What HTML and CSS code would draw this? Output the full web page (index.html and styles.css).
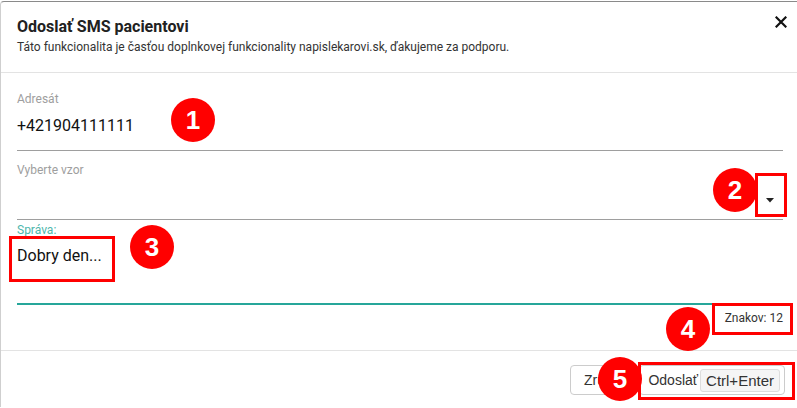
FILE: index.html
```html
<!DOCTYPE html>
<html lang="sk">
<head>
<meta charset="utf-8">
<title>Odoslať SMS pacientovi</title>
<link rel="stylesheet" href="styles.css">
</head>
<body>
<div class="modal">
  <div class="modal-header">
    <div class="header-text">
      <h4 class="title">Odoslať SMS pacientovi</h4>
      <p class="subtitle">Táto funkcionalita je časťou doplnkovej funkcionality napislekarovi.sk, ďakujeme za podporu.</p>
    </div>
    <button class="close" aria-label="Zavrieť">
      <svg width="12" height="12" viewBox="0 0 12 12"><path d="M1.5 1.5 L10.5 10.5 M10.5 1.5 L1.5 10.5" stroke="#111" stroke-width="2.2" stroke-linecap="square"/></svg>
    </button>
  </div>
  <div class="modal-body">
    <div class="field field-addr">
      <div class="label">Adresát</div>
      <div class="value">+421904111111</div>
    </div>
    <div class="field field-select">
      <div class="label">Vyberte vzor</div>
      <div class="select-row">
        <svg class="caret" width="10" height="5" viewBox="0 0 10 5"><path d="M1 0 H9 L5 4.5 Z" fill="#222"/></svg>
      </div>
    </div>
    <div class="field field-msg">
      <div class="label label-active">Správa:</div>
      <div class="textarea">Dobry den...</div>
    </div>
    <div class="counter">Znakov: 12</div>
  </div>
  <div class="modal-footer">
    <button class="btn">Zrušiť</button>
    <button class="btn btn-send">Odoslať <kbd class="kbd">Ctrl+Enter</kbd></button>
  </div>
</div>

<div class="annotations">
  <div class="mark mark-1">1</div>
  <div class="mark mark-2">2</div>
  <div class="mark mark-3">3</div>
  <div class="mark mark-4">4</div>
  <div class="mark mark-5">5</div>
  <div class="box box-2"></div>
  <div class="box box-3"></div>
  <div class="box box-4"></div>
  <div class="box box-5"></div>
</div>
</body>
</html>
```

FILE: styles.css
```css
html, body {
  margin: 0;
  padding: 0;
  background: #ffffff;
}

body {
  width: 797px;
  height: 408px;
  overflow: hidden;
  position: relative;
  font-family: Roboto, "Liberation Sans", sans-serif;
  color: #222;
}

.modal {
  margin-top: 1px;
  height: 406px;
  background: #fff;
  border-top: 1px solid #8a8a8a;
  border-left: 1px solid #cfcfcf;
  border-top-left-radius: 4px;
  box-sizing: border-box;
}

.modal-header {
  height: 70px;
  padding: 15px 9px 0 16px;
  box-sizing: content-box;
  height: 55px;
  border-bottom: 1px solid #e3e3e3;
  display: flex;
  justify-content: space-between;
  align-items: flex-start;
}

.title {
  margin: 0;
  font-size: 16px;
  line-height: 20px;
  font-weight: 700;
  color: #212121;
}

.subtitle {
  margin: 2px 0 0;
  font-size: 12px;
  line-height: 16px;
  color: #333;
}

.close {
  border: 0;
  background: transparent;
  padding: 0;
  margin-top: -2px;
  width: 14px;
  height: 14px;
  display: flex;
  align-items: center;
  justify-content: center;
}

.modal-body {
  padding: 0 14px 0 16px;
}

.field {
  border-bottom: 1px solid #9e9e9e;
}

.label {
  font-size: 12px;
  line-height: 16px;
  color: #9e9e9e;
}

.label-active {
  color: #4db6ac;
}

.field-addr {
  padding-top: 18px;
  padding-bottom: 12px;
}

.value {
  margin-top: 7px;
  font-size: 16px;
  line-height: 24px;
  color: #111;
}

.field-select {
  padding-top: 11px;
}

.select-row {
  height: 41px;
  display: flex;
  justify-content: flex-end;
  align-items: center;
  padding-right: 8px;
  padding-top: 3px;
  box-sizing: border-box;
}

.field-msg {
  padding-top: 2px;
  border-bottom: 2px solid #26a69a;
}

.textarea {
  height: 65px;
  padding-top: 6px;
  box-sizing: border-box;
  font-size: 16px;
  line-height: 24px;
  color: #111;
}

.counter {
  text-align: right;
  font-size: 12px;
  line-height: 16px;
  padding-top: 5px;
  height: 45px;
  box-sizing: border-box;
  color: #333;
}

.modal-footer {
  border-top: 1px solid #e3e3e3;
  padding: 14px 12px 0 0;
  display: flex;
  justify-content: flex-end;
  gap: 5px;
}

.btn {
  height: 30px;
  padding: 0 13px;
  background: #fff;
  border: 1px solid #ccc;
  border-radius: 4px;
  font-family: "Liberation Sans", Arial, sans-serif;
  font-size: 14px;
  color: #333;
  display: flex;
  align-items: center;
}

.btn-send {
  padding: 0 4px 0 8px;
  gap: 2px;
}

.kbd {
  font-family: "Liberation Sans", Arial, sans-serif;
  font-size: 15px;
  line-height: 21px;
  padding: 0 5px;
  background: #f5f5f5;
  border: 1px solid #ddd;
  border-radius: 3px;
  color: #333;
}

.annotations {
  position: absolute;
  inset: 0;
  pointer-events: none;
}

.mark {
  position: absolute;
  width: 44px;
  height: 44px;
  border-radius: 50%;
  background: #ff0000;
  color: #fff;
  font-family: "Liberation Sans", Arial, sans-serif;
  font-weight: 700;
  font-size: 26px;
  line-height: 44px;
  text-align: center;
}

.mark-1 { left: 171px; top: 98px; }
.mark-2 { left: 713px; top: 168px; }
.mark-3 { left: 130px; top: 225px; }
.mark-4 { left: 666px; top: 307px; }
.mark-5 { left: 598px; top: 357px; }

.box {
  position: absolute;
  border: 3px solid #ff0000;
  box-sizing: border-box;
}

.box-2 { left: 755px; top: 173px; width: 32px; height: 44px; }
.box-3 { left: 9px; top: 236px; width: 106px; height: 46px; }
.box-4 { left: 712px; top: 303px; width: 81px; height: 32px; }
.box-5 { left: 638px; top: 362px; width: 157px; height: 38px; }
```
